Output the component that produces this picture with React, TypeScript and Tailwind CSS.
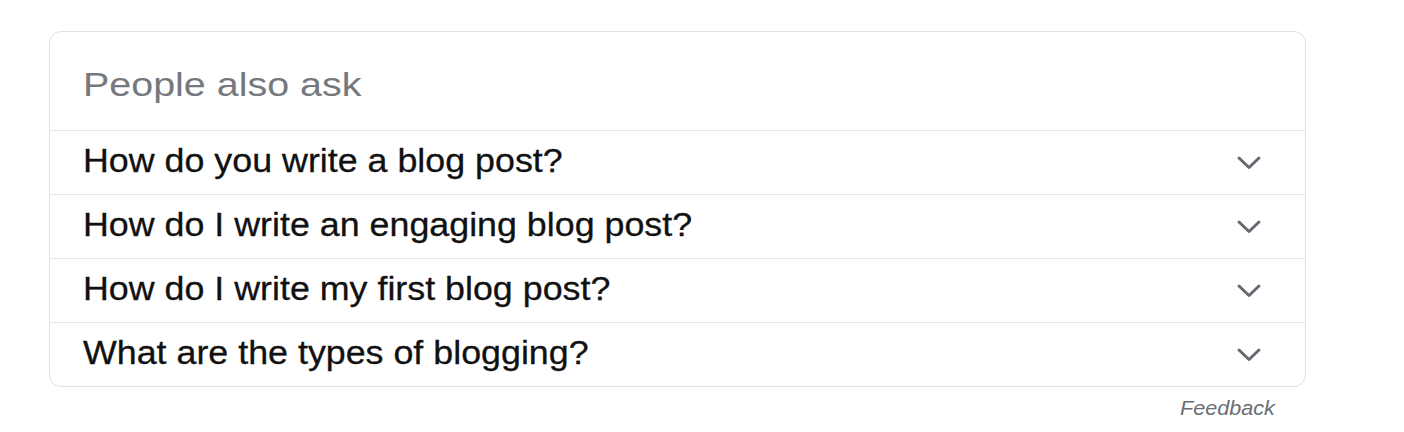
const questions = [
  "How do you write a blog post?",
  "How do I write an engaging blog post?",
  "How do I write my first blog post?",
  "What are the types of blogging?",
];

function Chevron() {
  return (
    <svg width="26" height="16" viewBox="0 0 26 16" fill="none" className="shrink-0">
      <polyline points="3,3 13,12.5 23,3" stroke="#646870" strokeWidth="3" strokeLinecap="round" strokeLinejoin="round" />
    </svg>
  );
}

export default function App() {
  return (
    <div className="w-[1404px] h-[432px] bg-white font-['Liberation_Sans',Arial,sans-serif]">
      <div className="pt-[31px] pl-[49px]">
        <div className="w-[1257px] border border-[#dfe1e5] rounded-[12px]">
          {/* header */}
          <div className="h-[98px] flex items-center pl-[33px] pt-[5px]">
            <span className="inline-block origin-left scale-x-[1.16] text-[34px] leading-none text-[#75787c]">
              People also ask
            </span>
          </div>

          {/* questions */}
          {questions.map((q) => (
            <div
              key={q}
              className="h-[64px] border-t border-[#e3e5e8] flex items-center justify-between pl-[33px] pr-[43px]"
            >
              <span className="inline-block origin-left scale-x-[1.085] text-[33px] leading-none text-[#111] -mt-[4px] [-webkit-text-stroke:0.3px_#111]">
                {q}
              </span>
              <Chevron />
            </div>
          ))}
        </div>

        {/* feedback link */}
        <div className="w-[1226px] flex justify-end mt-[10px]">
          <span className="inline-block origin-right scale-x-[1.08] text-[20px] leading-[22px] italic text-[#6a6e73]">
            Feedback
          </span>
        </div>
      </div>
    </div>
  );
}
